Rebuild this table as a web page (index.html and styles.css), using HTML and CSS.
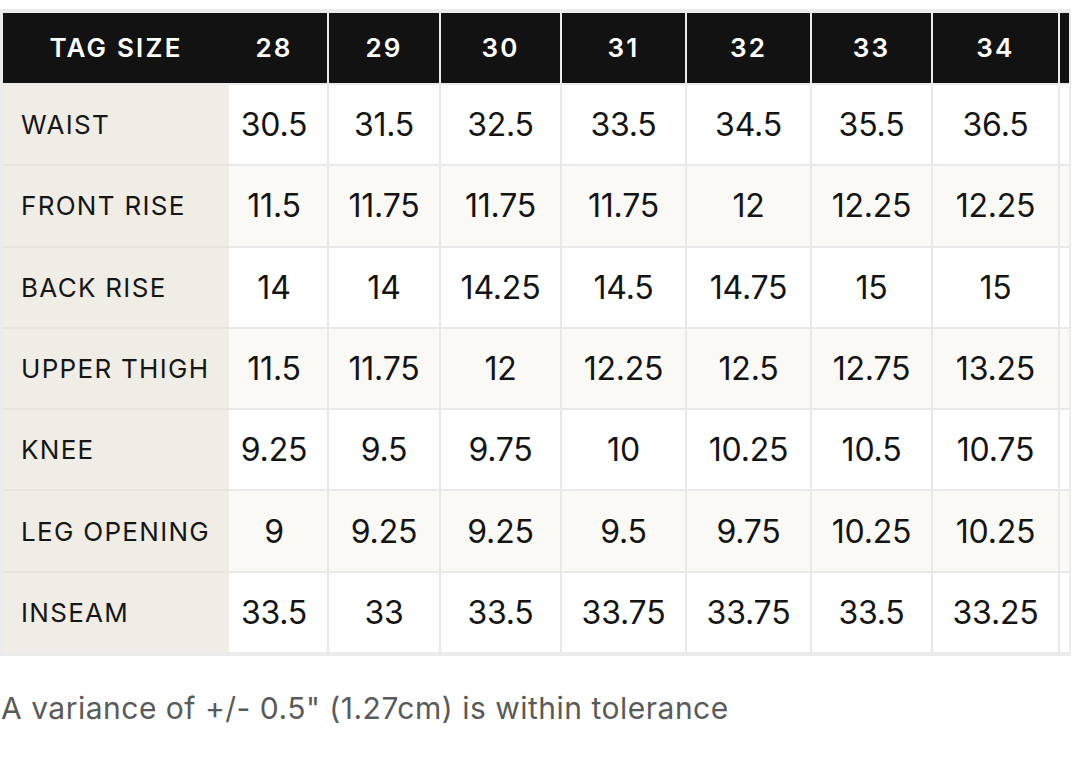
FILE: index.html
```html
<!DOCTYPE html>
<html lang="en">
<head>
<meta charset="utf-8">
<title>Size chart</title>
<link rel="stylesheet" href="styles.css">
</head>
<body>
<div class="chart">
  <div class="scroller">
    <table class="sizes">
      <thead>
        <tr>
          <th class="label c0">TAG SIZE</th>
          <th class="c1">28</th>
          <th class="c2">29</th>
          <th class="c3">30</th>
          <th class="c4">31</th>
          <th class="c5">32</th>
          <th class="c6">33</th>
          <th class="c7">34</th>
          <th class="c8"></th>
        </tr>
      </thead>
      <tbody>
        <tr class="r1"><td class="label">WAIST</td><td>30.5</td><td>31.5</td><td>32.5</td><td>33.5</td><td>34.5</td><td>35.5</td><td>36.5</td><td></td></tr>
        <tr class="r2"><td class="label">FRONT RISE</td><td>11.5</td><td>11.75</td><td>11.75</td><td>11.75</td><td>12</td><td>12.25</td><td>12.25</td><td></td></tr>
        <tr class="r3"><td class="label">BACK RISE</td><td>14</td><td>14</td><td>14.25</td><td>14.5</td><td>14.75</td><td>15</td><td>15</td><td></td></tr>
        <tr class="r4"><td class="label">UPPER THIGH</td><td>11.5</td><td>11.75</td><td>12</td><td>12.25</td><td>12.5</td><td>12.75</td><td>13.25</td><td></td></tr>
        <tr class="r5"><td class="label">KNEE</td><td>9.25</td><td>9.5</td><td>9.75</td><td>10</td><td>10.25</td><td>10.5</td><td>10.75</td><td></td></tr>
        <tr class="r6"><td class="label">LEG OPENING</td><td>9</td><td>9.25</td><td>9.25</td><td>9.5</td><td>9.75</td><td>10.25</td><td>10.25</td><td></td></tr>
        <tr class="r7"><td class="label">INSEAM</td><td>33.5</td><td>33</td><td>33.5</td><td>33.75</td><td>33.75</td><td>33.5</td><td>33.25</td><td></td></tr>
      </tbody>
    </table>
  </div>
  <p class="note">A variance of +/- 0.5" (1.27cm) is within tolerance</p>
</div>
</body>
</html>
```

FILE: styles.css
```css
* { box-sizing: border-box; }

html, body {
  margin: 0;
  padding: 0;
  background: #ffffff;
}

body {
  font-family: Inter, "Noto Sans", "Liberation Sans", sans-serif;
  color: #161616;
}

.chart {
  padding-top: 9px;
  width: 1071px;
}

.scroller {
  border-style: solid;
  border-color: #ebebeb;
  border-width: 4px 2px 4px 3px;
  overflow: hidden;
  width: 1071px;
}

.sizes {
  border-collapse: separate;
  border-spacing: 0;
  table-layout: fixed;
  width: 1177px;
}

.sizes th,
.sizes td {
  padding: 0;
  text-align: center;
  vertical-align: middle;
  white-space: nowrap;
}

.sizes thead th {
  background: #121212;
  color: #ffffff;
  height: 70px;
  padding-bottom: 2px;
  font-size: 26px;
  font-weight: 600;
  letter-spacing: 2.2px;
  border-left: 2px solid #ebebeb;
}

.sizes thead th.c0,
.sizes thead th.c1 {
  border-left: 0;
}

.c0 { width: 226px; }
.c1 { width: 98px; }
.c2 { width: 112px; }
.c3 { width: 121px; }
.c4 { width: 125px; }
.c5 { width: 125px; }
.c6 { width: 121px; }
.c7 { width: 127px; }
.c8 { width: 122px; }

.sizes thead th.c1,
.sizes tbody td:nth-child(2) {
  padding-right: 8px;
}

.sizes tbody td {
  height: 81.3px;
  font-size: 32px;
  font-weight: 400;
  letter-spacing: -0.2px;
  color: #141414;
  background: #ffffff;
  border-top: 2px solid #e9e9e9;
  border-left: 2px solid #e8e8e8;
}

.sizes tbody tr:nth-child(even) td {
  background: #faf9f5;
}

.sizes tbody td:nth-child(2) {
  border-left: 0;
}

.sizes tbody td.label,
.sizes tbody tr:nth-child(even) td.label {
  background: #f0ece6;
  border-left: 0;
  border-top-color: #e8e5df;
  text-align: left;
  padding-left: 18px;
  font-size: 26px;
  letter-spacing: 1.3px;
  color: #161616;
}

.sizes tbody tr.r1 td {
  border-top-color: #ebebeb;
}

.note {
  margin: 34px 0 0 1px;
  font-size: 30px;
  color: #5a5a5a;
  letter-spacing: 0.5px;
}
```
